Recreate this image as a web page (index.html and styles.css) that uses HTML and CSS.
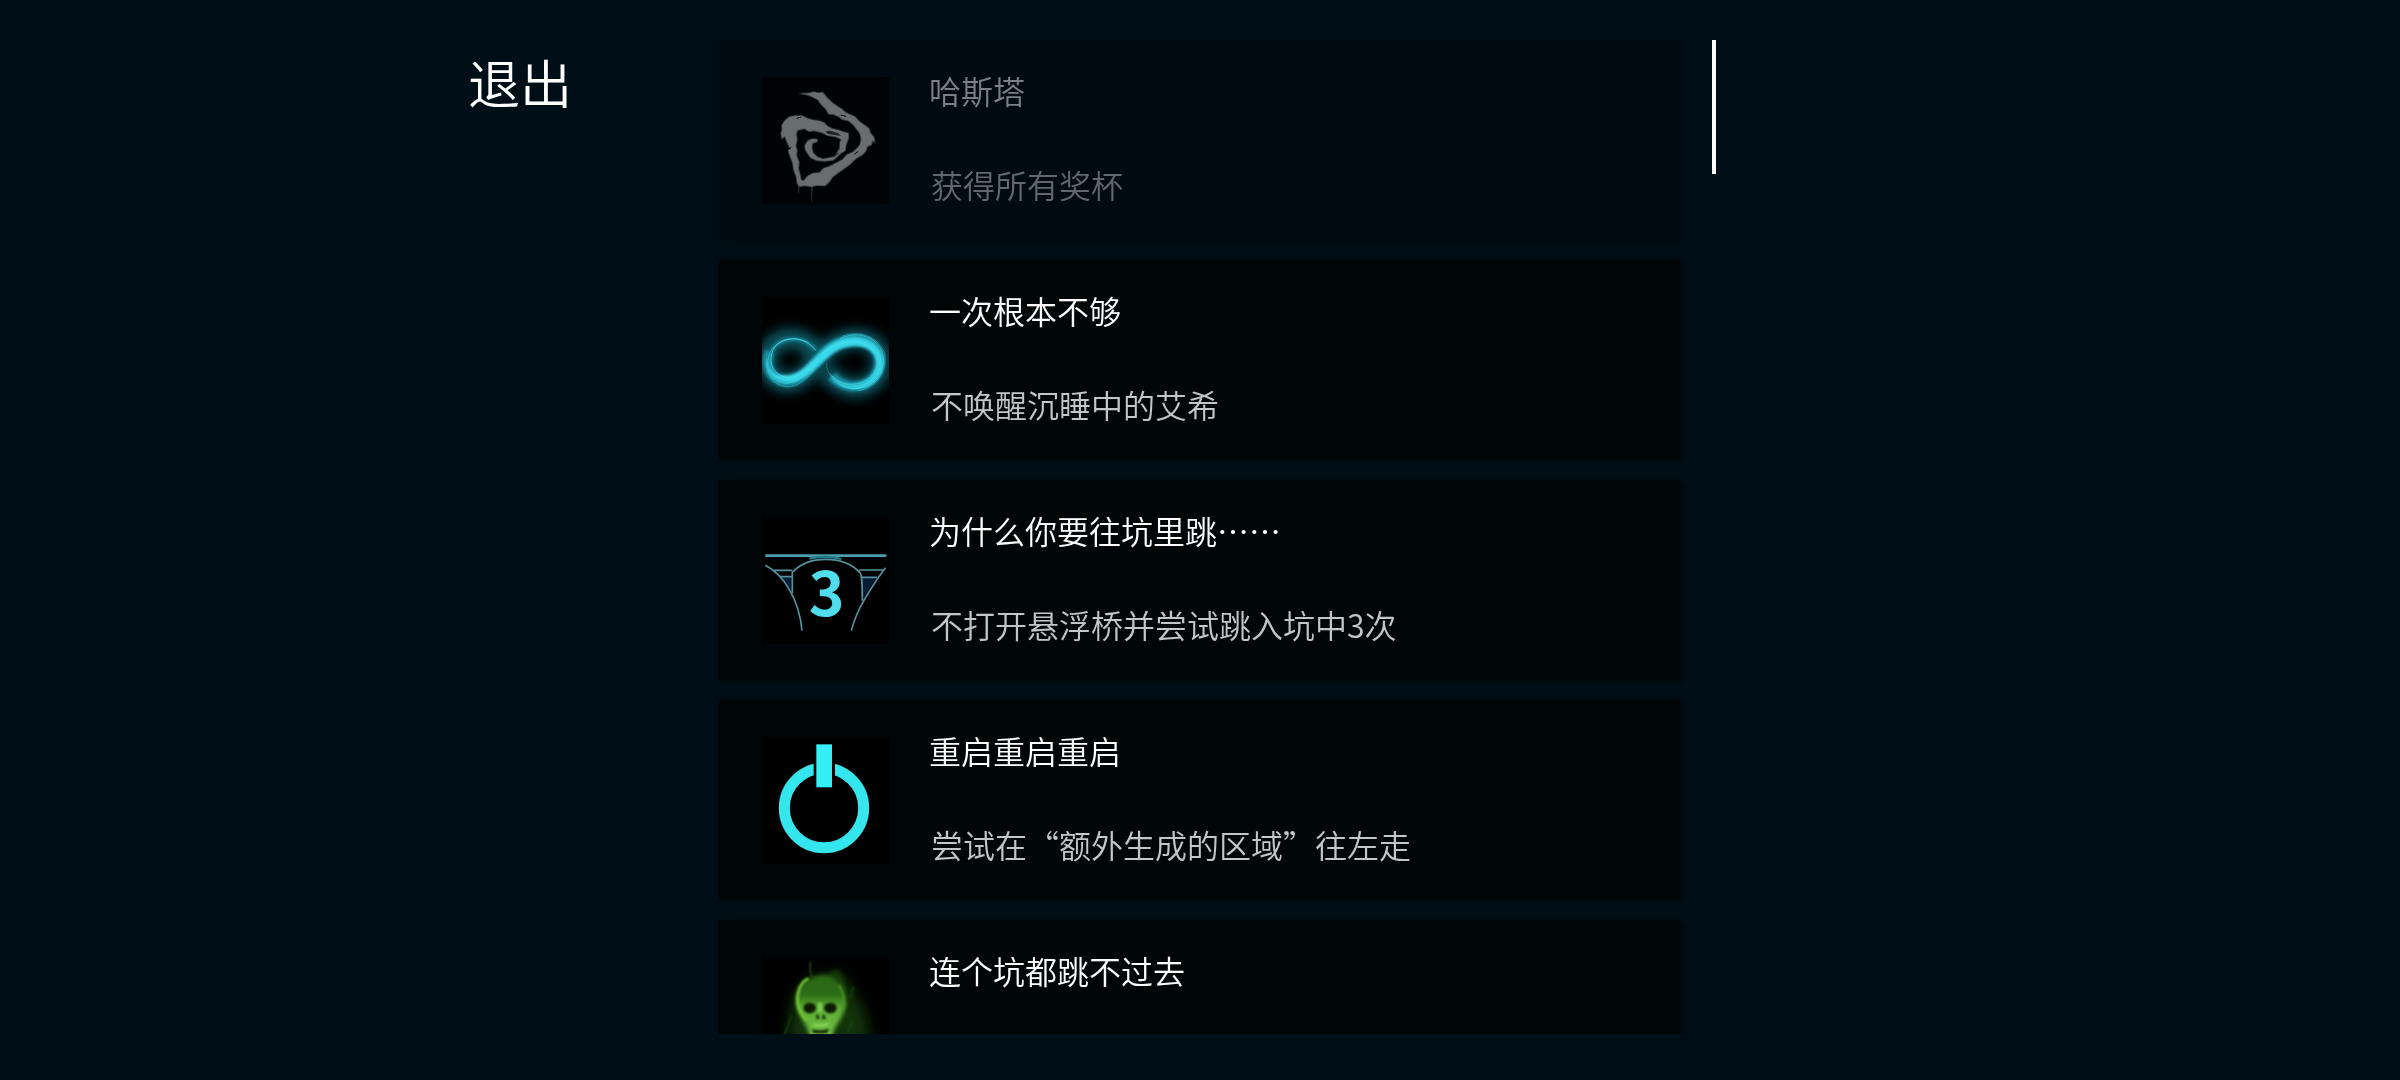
FILE: index.html
```
<!DOCTYPE html>
<html lang="zh-CN">
<head>
    <meta charset="UTF-8">
    <meta name="viewport" content="width=device-width, initial-scale=1.0">
    <title>成就</title>
    <link rel="stylesheet" href="styles.css">
</head>
<body>
    <div class="page">
        <div class="sidebar">
            <button type="button" class="exit-btn">退出</button>
        </div>

        <ul class="achievement-list">
            <li class="achievement locked">
                <svg class="achievement-icon" viewBox="66 51 381 381" aria-hidden="true">
                    <defs>
                        <filter id="softEdge"><feGaussianBlur stdDeviation="2"/></filter>
                    </defs>
                    <rect x="66" y="51" width="381" height="381" fill="#000305"/>
                    <g fill="#686d70" filter="url(#softEdge)">
                        <path d="M174 100L205 99L222 95L236 98L248 96L262 113L278 128L292 138L305 146L318 157L345 169L359 184L374 195L388 205L391 217L403 232L406 250L398 242L395 255L382 260L379 272L369 284L357 291L344 300L329 315L312 327L296 338L279 351L267 367L256 378L230 377L214 381L195 378L178 380L171 371L168 350L160 330L157 309L148 285L144 272L149 264L139 244L134 229L125 238L122 220L126 205L124 196L134 181L147 170L165 166L187 166L201 174L216 178L239 182L254 188L262 197L277 205L294 209L314 216L326 219L326 235L319 254L316 273L303 280L292 291L280 301L253 304L229 302L211 294L203 282L196 271L193 257L203 241L216 236L232 237L233 245L218 250L216 263L220 278L232 290L248 296L269 292L285 289L290 278L298 266L299 247L303 238L286 231L262 227L246 219L222 213L207 215L193 207L173 211L169 223L172 238L168 257L172 271L170 287L178 306L176 327L181 343L184 360L190 362L203 347L219 339L238 337L251 324L270 318L286 309L307 298L320 283L338 276L349 266L359 254L363 237L358 219L348 207L341 196L325 183L307 179L295 170L278 163L266 163L256 147L243 134L232 119L218 112L206 106Z"/>
                        <path d="M174 374L179 375L177 402L174 398ZM213 375L218 376L217 426L214 422Z" opacity="0.35"/>
                    </g>
                    <path d="M256 214L272 212L295 220L303 228L285 225L263 221Z" fill="#000305" opacity="0.7"/>
                    <path d="M170 175L184 171M302 165L318 169M146 267L154 263M288 286L296 278M343 283L355 274" stroke="#000305" stroke-width="3" fill="none"/>
                </svg>
                <div class="achievement-text">
                    <h2>哈斯塔</h2>
                    <p>获得所有奖杯</p>
                </div>
            </li>

            <li class="achievement">
                <svg class="achievement-icon" viewBox="66 51 381 381" aria-hidden="true">
                    <defs>
                        <filter id="glowWide" x="-30%" y="-50%" width="160%" height="200%"><feGaussianBlur stdDeviation="17"/></filter>
                        <filter id="glowTight" x="-20%" y="-20%" width="140%" height="140%"><feGaussianBlur stdDeviation="4"/></filter>
                        <filter id="glowLine"><feGaussianBlur stdDeviation="1"/></filter>
                    </defs>
                    <rect x="66" y="51" width="381" height="381" fill="#000"/>
                    <path d="M232 222C195 170 135 160 98 198C64 238 84 296 130 306C190 316 218 248 264 208C308 172 370 164 406 198C442 240 422 298 374 318C330 334 284 310 260 270" fill="none" stroke="#0f6f7e" stroke-width="60" opacity="0.75" filter="url(#glowWide)"/>
                    <g fill="none" filter="url(#glowTight)">
                        <path d="M90 214C72 254 90 298 134 304C190 310 218 246 264 208C308 174 372 168 402 202C432 236 420 290 376 312C336 328 298 314 276 288" stroke="#178da2" stroke-width="30"/>
                        <path d="M226 208C188 164 120 170 94 212" stroke="#167f90" stroke-width="12"/>
                    </g>
                    <!-- tapered bright body of the ribbon -->
                    <path d="M88 230C82 260 96 286 132 286C178 286 202 256 236 222C272 184 320 162 366 174C410 184 434 218 430 256C424 300 382 330 342 326C308 324 284 306 270 286C302 318 344 322 376 304C412 282 420 242 398 218C370 190 318 196 286 216C254 238 218 280 184 298C150 318 104 308 90 280C80 262 82 244 88 230Z" fill="#38d8ea" filter="url(#glowTight)"/>
                    <g fill="none" stroke="#4ce4f2" stroke-width="3" filter="url(#glowLine)">
                        <path d="M228 212C196 170 134 162 102 204C78 250 104 292 148 292C198 288 220 236 268 204C314 178 370 178 402 212" opacity="0.7"/>
                        <path d="M206 188C160 164 110 180 90 218C70 266 94 308 138 310C188 306 216 256 252 226" opacity="0.5"/>
                        <path d="M300 176C350 152 400 168 422 206C446 250 416 308 370 322C330 334 294 318 270 280" opacity="0.6"/>
                        <path d="M308 168C370 146 420 180 434 220C442 270 408 324 354 332" opacity="0.4"/>
                        <path d="M276 288C312 326 372 318 402 280C426 238 400 206 374 196" opacity="0.6"/>
                        <path d="M80 236C74 290 110 324 152 320C182 314 202 294 222 270" opacity="0.4"/>
                        <path d="M260 248C258 292 302 336 360 322" opacity="0.3"/>
                    </g>
                </svg>
                <div class="achievement-text">
                    <h2>一次根本不够</h2>
                    <p>不唤醒沉睡中的艾希</p>
                </div>
            </li>

            <li class="achievement">
                <svg class="achievement-icon" viewBox="66 51 381 381" aria-hidden="true">
                    <rect x="66" y="51" width="381" height="381" fill="#000"/>
                    <path d="M122 232L155 232L155 272ZM368 232L407 232L368 298Z" fill="#071d35"/>
                    <g fill="none" stroke="#55929f" stroke-width="5">
                        <path d="M76 167H439" stroke="#4e9daf" stroke-width="8"/>
                        <path d="M76 196C132 225 178 300 186 392"/>
                        <path d="M436 203C388 270 348 332 334 392"/>
                        <path d="M157 280V217C205 165 310 165 360 218C366 228 367 245 367 302"/>
                        <path d="M102 211H157M120 230H157M357 210H430M366 232H411"/>
                    </g>
                    <path d="M208 176C236 169 275 169 304 177" fill="none" stroke="#247c8c" stroke-width="7"/>
                    <text class="icon-digit" x="260" y="349" text-anchor="middle">3</text>
                </svg>
                <div class="achievement-text">
                    <h2>为什么你要往坑里跳……</h2>
                    <p>不打开悬浮桥并尝试跳入坑中3次</p>
                </div>
            </li>

            <li class="achievement">
                <svg class="achievement-icon" viewBox="66 51 381 381" aria-hidden="true">
                    <rect x="66" y="51" width="381" height="381" fill="#000"/>
                    <g filter="url(#softEdge)">
                        <circle cx="252" cy="264" r="119" fill="none" stroke="#35e6ee" stroke-width="33"/>
                        <rect x="221" y="115" width="64" height="60" fill="#000"/>
                        <rect x="229" y="73" width="47" height="129" fill="#35eef6"/>
                    </g>
                </svg>
                <div class="achievement-text">
                    <h2>重启重启重启</h2>
                    <p>尝试在“额外生成的区域”往左走</p>
                </div>
            </li>

            <li class="achievement">
                <svg class="achievement-icon" viewBox="66 81 381 381" aria-hidden="true">
                    <defs>
                        <filter id="smoke" x="-40%" y="-40%" width="180%" height="180%"><feGaussianBlur stdDeviation="20"/></filter>
                        <filter id="haze" x="-30%" y="-30%" width="160%" height="160%"><feGaussianBlur stdDeviation="6"/></filter>
                        <filter id="detail" x="-20%" y="-20%" width="140%" height="140%"><feGaussianBlur stdDeviation="3"/></filter>
                        <linearGradient id="skull" x1="0" y1="0" x2="0" y2="1">
                            <stop offset="0" stop-color="#2c6a16"/>
                            <stop offset="0.3" stop-color="#2c6c15"/>
                            <stop offset="0.5" stop-color="#5cac32"/>
                            <stop offset="1" stop-color="#72c043"/>
                        </linearGradient>
                    </defs>
                    <rect x="66" y="81" width="381" height="381" fill="#000"/>
                    <path d="M250 140C300 110 330 150 340 190C370 220 390 280 390 340H140C150 290 150 190 190 160Z" fill="#153f0b" opacity="0.8" filter="url(#smoke)"/>
                    <path d="M245 146C265 140 280 110 296 122C318 145 318 180 326 222L310 240Z" fill="#1d4d0f" opacity="0.6" filter="url(#haze)"/>
                    <path d="M216 143C238 130 270 133 292 155C312 176 321 210 313 240C306 270 282 285 274 330H211C207 287 178 264 171 232C161 196 180 157 216 143Z" fill="url(#skull)" filter="url(#haze)"/>
                    <g fill="none" filter="url(#detail)">
                        <path d="M206 146C181 155 168 190 174 222C178 243 188 258 200 270" stroke="#72c536" stroke-width="9"/>
                        <path d="M216 144Q208 118 212 95" stroke="#315c20" stroke-width="4"/>
                        <path d="M297 165C312 190 317 220 308 242" stroke="#4c9925" stroke-width="6"/>
                        <path d="M240 218V246" stroke="#80cf50" stroke-width="12"/>
                        <path d="M220 284Q240 290 264 282" stroke="#86d458" stroke-width="8"/>
                        <path d="M214 316H270" stroke="#a0e872" stroke-width="8"/>
                        <path d="M155 255L132 318M340 170L330 208M338 270L322 312" stroke="#1b4010" stroke-width="5"/>
                    </g>
                    <g fill="#071b03" filter="url(#detail)">
                        <ellipse cx="209" cy="234" rx="19" ry="16"/>
                        <ellipse cx="271" cy="234" rx="19" ry="16"/>
                        <path d="M230 251L240 265L229 268ZM249 251L258 264L247 269Z"/>
                        <path d="M217 298Q242 306 266 296L262 308Q240 312 219 308Z"/>
                    </g>
                </svg>
                <div class="achievement-text">
                    <h2>连个坑都跳不过去</h2>
                </div>
            </li>
        </ul>

        <div class="scroll-track" aria-hidden="true">
            <div class="scroll-thumb"></div>
        </div>
    </div>
</body>
</html>
```
FILE: styles.css
```
:root {
    --background-color: #000f17;
    --card-background: #000608;
    --card-locked: #000a11;
    --text-color: #ffffff;
    --text-secondary: #c3c6c8;
    --text-locked: #7a8085;
    --text-locked-secondary: #61676c;
    --icon-cyan: #4fdcec;
}

* {
    margin: 0;
    padding: 0;
    box-sizing: border-box;
}

body {
    font-family: "Noto Sans CJK SC", sans-serif;
    font-weight: 350;
    background-color: var(--background-color);
    color: var(--text-color);
}

.page {
    display: grid;
    grid-template-columns: 359fr 487fr 354fr;
    height: 100vh;
    padding: 40px 0 46px;
}

.sidebar {
    display: flex;
    justify-content: flex-end;
    align-items: flex-start;
    padding-right: 104px;
}

.exit-btn {
    width: 188px;
    height: 88px;
    padding-bottom: 4px;
    border: 1px solid #001119;
    background: transparent;
    color: var(--text-color);
    font-family: inherit;
    font-size: 52px;
    font-weight: 350;
    line-height: 80px;
    cursor: pointer;
}

.achievement-list {
    display: flex;
    flex-direction: column;
    gap: 20px;
    min-height: 0;
    padding-right: 12px;
    overflow-y: auto;
    scrollbar-width: none;
    list-style: none;
}

.achievement {
    display: flex;
    flex-shrink: 0;
    align-items: flex-start;
    gap: 40px;
    min-height: 200px;
    padding: 37px 44px 32px;
    background-color: var(--card-background);
    box-shadow: 2px 1px 6px var(--card-background);
}

.achievement.locked {
    background-color: var(--card-locked);
    box-shadow: 2px 1px 6px var(--card-locked);
}

.achievement-icon {
    flex-shrink: 0;
    width: 127px;
    height: 127px;
}

.achievement-text {
    display: flex;
    flex-direction: column;
    gap: 46px;
    margin-top: -11px;
}

.achievement-text h2,
.achievement-text p {
    font-size: 32px;
    font-weight: 350;
    line-height: 48px;
}

.achievement-text p {
    padding-left: 2px;
    color: var(--text-secondary);
}

.locked .achievement-text h2 {
    color: var(--text-locked);
}

.locked .achievement-text p {
    color: var(--text-locked-secondary);
}

.icon-digit {
    fill: var(--icon-cyan);
    font-family: "Noto Sans CJK SC", sans-serif;
    font-size: 182px;
    font-weight: 700;
}

.scroll-track {
    padding-left: 20px;
}

.scroll-thumb {
    width: 4px;
    height: 134px;
    background-color: var(--text-color);
}
```
